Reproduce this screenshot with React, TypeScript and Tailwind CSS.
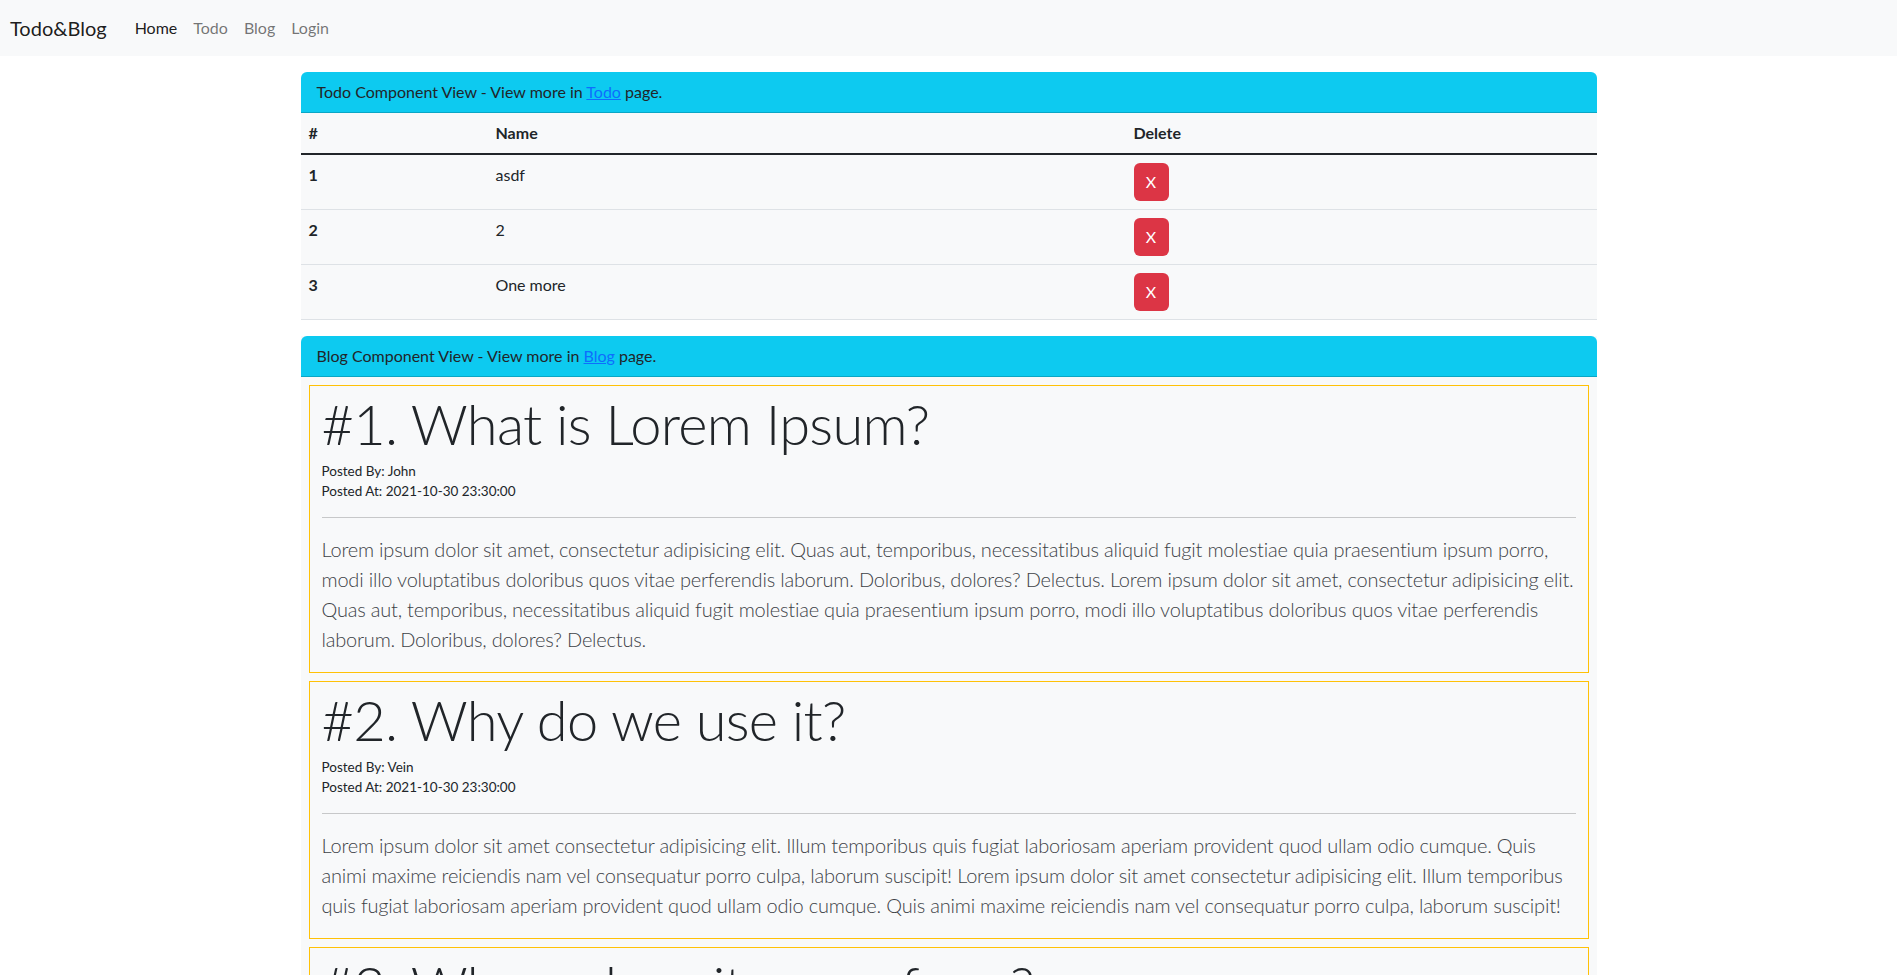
const todos = [
  { id: 1, name: "asdf" },
  { id: 2, name: "2" },
  { id: 3, name: "One more" },
];

const posts = [
  {
    id: 1,
    title: "What is Lorem Ipsum?",
    author: "John",
    at: "2021-10-30 23:30:00",
    lines: [
      "Lorem ipsum dolor sit amet, consectetur adipisicing elit. Quas aut, temporibus, necessitatibus aliquid fugit molestiae quia praesentium ipsum porro,",
      "modi illo voluptatibus doloribus quos vitae perferendis laborum. Doloribus, dolores? Delectus. Lorem ipsum dolor sit amet, consectetur adipisicing elit.",
      "Quas aut, temporibus, necessitatibus aliquid fugit molestiae quia praesentium ipsum porro, modi illo voluptatibus doloribus quos vitae perferendis",
      "laborum. Doloribus, dolores? Delectus.",
    ],
  },
  {
    id: 2,
    title: "Why do we use it?",
    author: "Vein",
    at: "2021-10-30 23:30:00",
    lines: [
      "Lorem ipsum dolor sit amet consectetur adipisicing elit. Illum temporibus quis fugiat laboriosam aperiam provident quod ullam odio cumque. Quis",
      "animi maxime reiciendis nam vel consequatur porro culpa, laborum suscipit! Lorem ipsum dolor sit amet consectetur adipisicing elit. Illum temporibus",
      "quis fugiat laboriosam aperiam provident quod ullam odio cumque. Quis animi maxime reiciendis nam vel consequatur porro culpa, laborum suscipit!",
    ],
  },
  {
    id: 3,
    title: "Where does it come from?",
    author: "Anna",
    at: "2021-10-30 23:30:00",
    lines: [
      "Lorem ipsum dolor sit amet, consectetur adipisicing elit. Nesciunt, ratione. Molestias quibusdam sequi dolorum nisi repellendus, eius expedita quae",
      "tempora cumque voluptas asperiores, nulla sit facilis magnam aliquid accusantium. Lorem ipsum dolor sit amet, consectetur adipisicing elit.",
    ],
  },
];

function CardHeader({ label, link }: { label: string; link: string }) {
  return (
    <div className="px-4 py-2 leading-6 bg-[#0dcaf0] border-b border-black/[.175] rounded-t-[6px] text-[#212529]">
      {label} Component View - View more in{" "}
      <a href="#" className="text-[#0d6efd] underline">
        {link}
      </a>{" "}
      page.
    </div>
  );
}

export default function App() {
  return (
    <div className="min-h-screen bg-white text-[#212529] text-base font-['Lato',sans-serif]">
      {/* Navbar */}
      <nav className="h-14 bg-[#f8f9fa] flex items-center px-[10px]">
        <span className="text-xl mr-5 text-black/90">Todo&amp;Blog</span>
        <div className="flex">
          <a className="px-2 py-2 text-black/90">Home</a>
          <a className="px-2 py-2 text-black/55">Todo</a>
          <a className="px-2 py-2 text-black/55">Blog</a>
          <a className="px-2 py-2 text-black/55">Login</a>
        </div>
      </nav>

      <main className="max-w-[1320px] mx-auto px-3 pt-4">
        {/* Todo card */}
        <div className="mb-4">
          <CardHeader label="Todo" link="Todo" />
          <table className="w-full bg-[#f8f9fa] border-collapse">
            <thead>
              <tr className="border-b-2 border-[#212529] text-left">
                <th className="w-[187px] px-2 py-2 leading-6 font-bold">#</th>
                <th className="w-[638px] px-2 py-2 leading-6 font-bold">Name</th>
                <th className="px-2 py-2 leading-6 font-bold">Delete</th>
              </tr>
            </thead>
            <tbody>
              {todos.map((t) => (
                <tr key={t.id} className="border-b border-[#dee2e6] align-top">
                  <td className="px-2 py-2 leading-6 font-bold">{t.id}</td>
                  <td className="px-2 py-2 leading-6">{t.name}</td>
                  <td className="px-2 py-2">
                    <button className="w-[35px] h-[38px] rounded-[6px] bg-[#dc3545] text-white leading-6">
                      X
                    </button>
                  </td>
                </tr>
              ))}
            </tbody>
          </table>
        </div>

        {/* Blog card */}
        <div className="bg-[#f8f9fa] pb-2">
          <CardHeader label="Blog" link="Blog" />
          <div className="flex flex-col gap-2 pt-2 px-2">
            {posts.map((p) => (
              <div
                key={p.id}
                className="border border-[#ffc107] px-3 pt-[4px] pb-[18px]"
              >
                <h1 className="text-[56px] font-light leading-[67px] mb-1 tracking-[-0.7px]">
                  #{p.id}. {p.title}
                </h1>
                <div className="text-[13.5px] leading-5">
                  <div>Posted By: {p.author}</div>
                  <div>Posted At: {p.at}</div>
                </div>
                <hr className="my-4 border-0 border-t border-[#c7c8c9]" />
                <p className="text-xl font-light leading-[30px] tracking-[-0.2px] text-[#3d4247]">
                  {p.lines.map((l, i) => (
                    <span key={i} className="block whitespace-nowrap">
                      {l}
                    </span>
                  ))}
                </p>
              </div>
            ))}
          </div>
        </div>
      </main>
    </div>
  );
}
